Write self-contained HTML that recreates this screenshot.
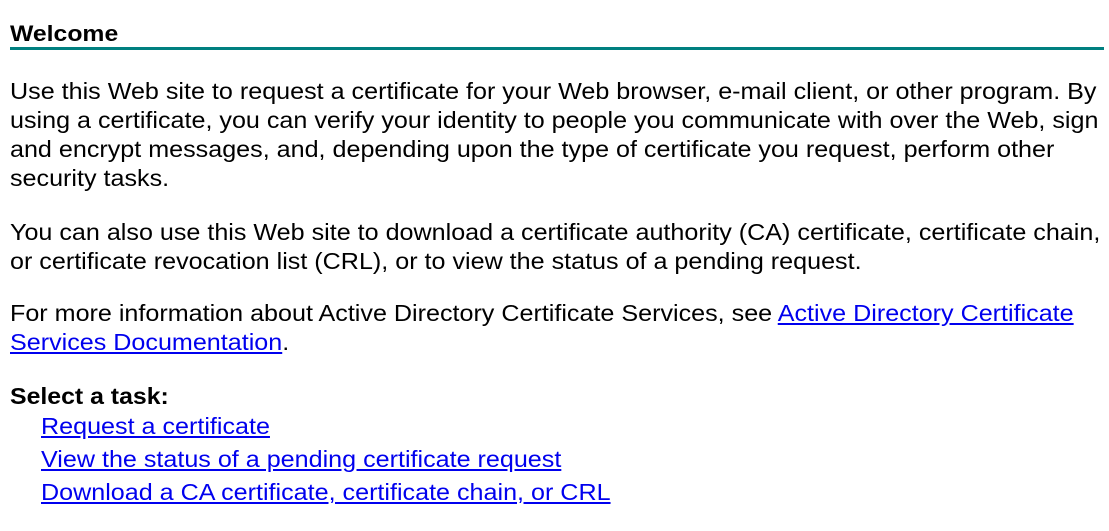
<!DOCTYPE html>
<html><head><meta charset="utf-8"><style>
body{margin:0;background:#fff;width:1109px;height:531px;overflow:hidden;font-family:"Liberation Sans",Arial,sans-serif;color:#000}
.l{position:absolute;left:10px;font-size:23px;line-height:29px;white-space:nowrap;transform:scaleX(1.092);transform-origin:0 0}
a{color:#0000ee;text-decoration:underline}
.b{font-weight:bold}
.rule{position:absolute;left:10px;top:47px;width:1094px;height:3px;background:#008080}
</style></head><body>
<div class="l b" style="top:19px;font-size:22px;transform:scaleX(1.125)">Welcome</div>
<div class="rule"></div>
<div class="l" style="top:77px">Use this Web site to request a certificate for your Web browser, e-mail client, or other program. By</div>
<div class="l" style="top:106px">using a certificate, you can verify your identity to people you communicate with over the Web, sign</div>
<div class="l" style="top:135px">and encrypt messages, and, depending upon the type of certificate you request, perform other</div>
<div class="l" style="top:164px">security tasks.</div>
<div class="l" style="top:218px">You can also use this Web site to download a certificate authority (CA) certificate, certificate chain,</div>
<div class="l" style="top:247px">or certificate revocation list (CRL), or to view the status of a pending request.</div>
<div class="l" style="top:299px">For more information about Active Directory Certificate Services, see <a>Active Directory Certificate</a></div>
<div class="l" style="top:328px"><a>Services Documentation</a>.</div>
<div class="l b" style="top:382px;transform:scaleX(1.08)">Select a task:</div>
<div class="l" style="top:412px;left:41px"><a>Request a certificate</a></div>
<div class="l" style="top:445px;left:41px"><a>View the status of a pending certificate request</a></div>
<div class="l" style="top:478px;left:41px"><a>Download a CA certificate, certificate chain, or CRL</a></div>
</body></html>
